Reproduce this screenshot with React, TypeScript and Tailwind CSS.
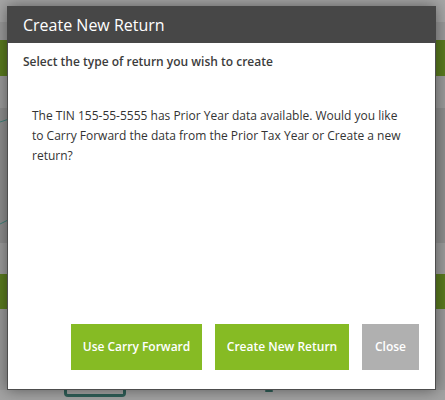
import React from "react";

// Page behind the dialog, dimmed by the overlay
const Backdrop = () => (
  <div className="flex flex-col h-[400px] w-full bg-[#9c9c9c]">
    <div className="h-[22px] bg-[#a6a6a6]" />
    <div className="h-[18px] bg-[#9a9a9a]" />
    <div className="h-[36px] bg-[#5a7b1f]" />
    <div className="h-[32px] bg-[#9b9b9b]" />
    <div className="relative h-[135px] bg-[#8e8e8e]">
      <svg className="absolute left-0 top-0" width="40" height="135" viewBox="0 0 40 135">
        <path d="M0 14 L12 10" stroke="#3d8078" strokeWidth="1" fill="none" />
        <path d="M0 116 L8 112" stroke="#3d8078" strokeWidth="1" fill="none" />
      </svg>
    </div>
    <div className="h-[31px] bg-[#9c9c9c]" />
    <div className="h-[35px] bg-[#5a7b1f]" />
    <div className="h-[81px] bg-[#9a9a9a]" />
    <div className="relative flex-1 bg-[#a3a3a3]">
      <div className="absolute left-[64px] top-[-6px] h-[13px] w-[62px] rounded-b-[4px] border-[3px] border-t-0 border-[#2f5f58]" />
      <div className="absolute left-[265px] top-[0px] h-[2px] w-[8px] rounded-full bg-[#2f5f58]" />
    </div>
  </div>
);

export default function App() {
  return (
    <div
      className="relative w-[445px] h-[400px] overflow-hidden"
      style={{ fontFamily: '"Open Sans", "Noto Sans", sans-serif' }}
    >
      <Backdrop />

      {/* Dialog */}
      <div className="absolute left-[7px] top-[6px] w-[429px] h-[384px] flex flex-col bg-white border border-[#4d4d4d] shadow-[0_0_14px_rgba(0,0,0,0.45)]">
        <div className="h-[37px] bg-[#474747] -mx-px -mt-px flex items-center px-[16px]">
          <h2 className="text-white text-[16px] leading-none">Create New Return</h2>
        </div>

        <div className="px-[15px] pt-[10px]">
          <p className="text-[#3c3c3c] text-[12px] font-semibold leading-[18px]">
            Select the type of return you wish to create
          </p>
        </div>

        <div className="flex-1 pl-[24px] pr-[30px] pt-[35px]">
          <p className="text-[#333333] text-[12px] leading-[20px]">
            The TIN 155-55-5555 has Prior Year data available. Would you like
            to Carry Forward the data from the Prior Tax Year or Create a new
            return?
          </p>
        </div>

        <div className="flex justify-end gap-[13px] pr-[16px] pb-[19px]">
          <button className="h-[46px] w-[131px] bg-[#86bb24] text-white text-[12px] font-semibold">
            Use Carry Forward
          </button>
          <button className="h-[46px] w-[134px] bg-[#86bb24] text-white text-[12px] font-semibold">
            Create New Return
          </button>
          <button className="h-[46px] w-[57px] bg-[#b0b0b0] text-white text-[12px] font-semibold">
            Close
          </button>
        </div>
      </div>
    </div>
  );
}
